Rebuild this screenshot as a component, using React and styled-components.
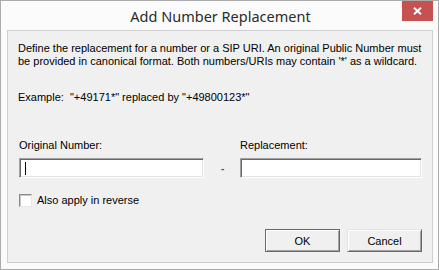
import React from "react";
import styled, { createGlobalStyle } from "styled-components";

const Global = createGlobalStyle`
  html, body { margin: 0; padding: 0; background: #ffffff; }
  body { width: 439px; height: 270px; overflow: hidden; }
`;

const Window = styled.div`
  box-sizing: border-box;
  width: 439px;
  height: 270px;
  border: 1px solid #ababab;
  background: #fbfbfb;
  display: flex;
  flex-direction: column;
  padding: 0 5px 6px 6px;
`;

const TitleBar = styled.div`
  height: 29px;
  display: grid;
  grid-template-columns: 1fr auto 1fr;
  align-items: start;
  margin: 0 -5px 0 -6px;
`;

const Title = styled.div`
  grid-column: 2;
  font-family: "Noto Sans", "Open Sans", sans-serif;
  font-size: 14.5px;
  line-height: 20px;
  padding-top: 5px;
  color: #2b2b2b;
  padding-left: 2px;
`;

const CloseButton = styled.div`
  grid-column: 3;
  justify-self: end;
  margin-right: 5px;
  width: 31px;
  height: 20px;
  background: #c75050;
  display: flex;
  align-items: center;
  justify-content: center;
`;

const Client = styled.div`
  flex: 1;
  box-sizing: border-box;
  border: 1px solid #cfcfcf;
  background: #f0f0f0;
  display: flex;
  flex-direction: column;
  padding: 11px 10px 10px 10px;
  font-family: "Liberation Sans", Arial, sans-serif;
  font-size: 11px;
  line-height: 13px;
  color: #000000;
`;

const Paragraph = styled.p`
  margin: 0;
  margin-top: ${(p) => p.$top || 0}px;
  white-space: pre;
`;

const Fields = styled.div`
  display: grid;
  grid-template-columns: 185px 1fr 182px;
  grid-template-rows: 13px 20px;
  row-gap: 6px;
  margin-top: 35px;
  padding-left: 1px;
`;

const Label = styled.label`
  display: block;
`;

const Dash = styled.div`
  grid-row: 2;
  grid-column: 2;
  text-align: center;
  line-height: 20px;
  color: #1f62c4;
  font-weight: bold;
  padding-left: 1px;
`;

const Field = styled.div`
  box-sizing: border-box;
  height: 20px;
  background: #ffffff;
  border-top: 1px solid #a0a0a0;
  border-left: 1px solid #a0a0a0;
  border-bottom: 1px solid #ffffff;
  border-right: 1px solid #ffffff;
  box-shadow: inset 1px 1px 0 #696969, inset -1px -1px 0 #e3e3e3;
  display: flex;
  align-items: center;
  padding-left: 5px;
`;

const Caret = styled.span`
  width: 1px;
  height: 13px;
  background: #000000;
`;

const CheckRow = styled.div`
  display: flex;
  align-items: center;
  gap: 5px;
  margin-top: 16px;
  padding-left: 1px;
`;

const Box = styled.span`
  box-sizing: border-box;
  width: 13px;
  height: 13px;
  background: #ffffff;
  border-top: 1px solid #8a8a8a;
  border-left: 1px solid #8a8a8a;
  border-bottom: 1px solid #e6e6e6;
  border-right: 1px solid #e6e6e6;
  box-shadow: inset 1px 1px 0 #c8c8c8;
`;

const ButtonRow = styled.div`
  margin-top: auto;
  display: flex;
  justify-content: flex-end;
  gap: 7px;
`;

const Button = styled.button`
  box-sizing: border-box;
  width: 75px;
  height: 23px;
  padding: 0;
  font-family: "Liberation Sans", Arial, sans-serif;
  font-size: 11px;
  color: #000000;
  background: #f0f0f0;
  border-style: solid;
  border-width: 1px;
  border-color: ${(p) =>
    p.$default ? "#6a6a6a #696969 #696969 #6a6a6a" : "#e3e3e3 #696969 #696969 #e3e3e3"};
  box-shadow: inset 1px 1px 0 #ffffff, inset -1px -1px 0 #a0a0a0;
`;

export default function App() {
  return (
    <>
      <Global />
      <Window>
        <TitleBar>
          <Title>Add Number Replacement</Title>
          <CloseButton>
            <svg width="9" height="8" viewBox="0 0 9 8">
              <path d="M1 0.8 L8 7.2 M8 0.8 L1 7.2" stroke="#ffffff" strokeWidth="2" />
            </svg>
          </CloseButton>
        </TitleBar>
        <Client>
          <Paragraph>
            Define the replacement for a number or a SIP URI. An original Public Number must
          </Paragraph>
          <Paragraph>
            be provided in canonical format. Both numbers/URIs may contain '*' as a wildcard.
          </Paragraph>
          <Paragraph $top={23}>Example:  "+49171*" replaced by "+49800123*"</Paragraph>
          <Fields>
            <Label>Original Number:</Label>
            <span />
            <Label>Replacement:</Label>
            <Field>
              <Caret />
            </Field>
            <Dash>-</Dash>
            <Field />
          </Fields>
          <CheckRow>
            <Box />
            <span>Also apply in reverse</span>
          </CheckRow>
          <ButtonRow>
            <Button $default>OK</Button>
            <Button>Cancel</Button>
          </ButtonRow>
        </Client>
      </Window>
    </>
  );
}
